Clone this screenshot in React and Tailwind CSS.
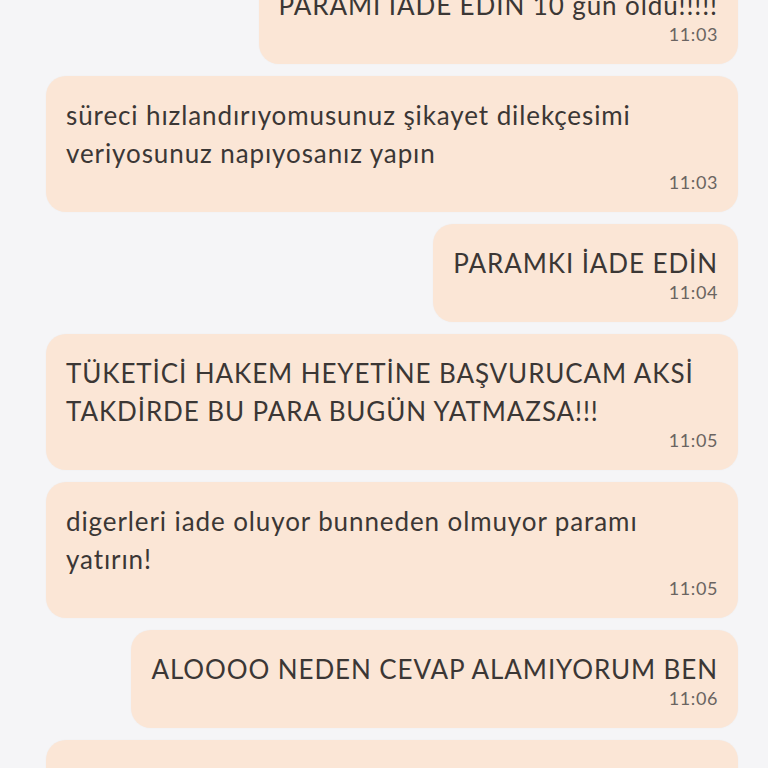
import React from 'react';

const messages = [
  { mine: true, text: 'PARAMI İADE EDİN 10 gün oldu!!!!!', time: '11:03' },
  { mine: false, text: 'süreci hızlandırıyomusunuz şikayet dilekçesimi veriyosunuz napıyosanız yapın', time: '11:03' },
  { mine: true, text: 'PARAMKI İADE EDİN', time: '11:04' },
  { mine: false, text: 'TÜKETİCİ HAKEM HEYETİNE BAŞVURUCAM AKSİ TAKDİRDE BU PARA BUGÜN YATMAZSA!!!', time: '11:05' },
  { mine: false, text: 'digerleri iade oluyor bunneden olmuyor paramı yatırın!', time: '11:05' },
  { mine: true, text: 'ALOOOO NEDEN CEVAP ALAMIYORUM BEN', time: '11:06' },
  { mine: false, text: 'Lütfen dilekçemi bildirin her gün soruyorum hala bir cevap yok', time: '11:06' },
];

function Bubble({ mine, text, time }) {
  return (
    <div
      className={
        mine
          ? 'self-end max-w-full rounded-[20px] bg-[#fbe6d6] px-5 pt-5 pb-5 shadow-[0_0_2px_rgba(0,0,0,0.04)]'
          : 'w-full rounded-[20px] bg-[#fbe6d6] px-5 pt-5 pb-5 shadow-[0_0_2px_rgba(0,0,0,0.04)]'
      }
    >
      <p className="text-[26px] leading-[38px] tracking-[0.9px] text-[#3b3735]">{text}</p>
      <p className="text-right text-[18px] leading-[20px] tracking-[0.6px] text-[#6a6461]">{time}</p>
    </div>
  );
}

export default function App() {
  return (
    <div
      className="h-[768px] overflow-hidden bg-[#f5f5f7]"
      style={{ fontFamily: 'Lato, "Noto Sans", sans-serif' }}
    >
      <div className="mt-[-34px] flex flex-col gap-3 pl-[46px] pr-[30px]">
        {messages.map((m, i) => (
          <Bubble key={i} {...m} />
        ))}
      </div>
    </div>
  );
}
